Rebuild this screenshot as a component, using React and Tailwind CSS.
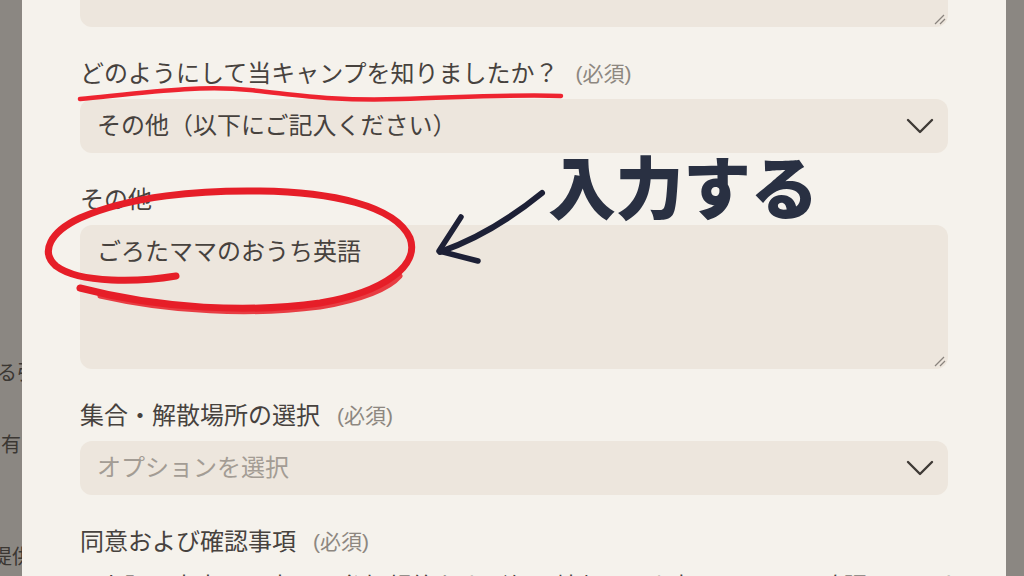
import React from "react";

function Handle() {
  return (
    <svg className="absolute right-[2px] bottom-[2px]" width="12" height="12" viewBox="0 0 12 12">
      <line x1="1" y1="11" x2="10" y2="2" stroke="#8a847e" strokeWidth="1.2" />
      <line x1="6" y1="11" x2="11" y2="6" stroke="#8a847e" strokeWidth="1.2" />
    </svg>
  );
}

function Label({ text, required = true }) {
  return (
    <div className="mt-[29px] mb-[7px] flex h-[36px] shrink-0 items-center whitespace-nowrap text-[24px] leading-[36px] text-[#47423e]">
      <span>{text}</span>
      {required && <span className="ml-[17px] text-[21px] text-[#8d8780]">(必須)</span>}
    </div>
  );
}

function Chevron() {
  return (
    <svg width="28" height="17" viewBox="0 0 28 17" fill="none">
      <polyline points="2,2 14,14 26,2" stroke="#3f3a36" strokeWidth="2.4" strokeLinecap="round" strokeLinejoin="round" />
    </svg>
  );
}

function Select({ value, placeholder }) {
  return (
    <div className="flex h-[54px] shrink-0 items-center justify-between rounded-xl bg-[#ede6dd] pl-[17px] pr-[14px] text-[24px]">
      <span className={placeholder ? "text-[#a39c94]" : "text-[#47423e]"}>{value}</span>
      <Chevron />
    </div>
  );
}

export default function App() {
  return (
    <div className="relative flex h-[576px] w-[1024px] overflow-hidden bg-[#8b8782] font-['Liberation_Sans','Noto_Sans_CJK_JP',sans-serif]">
      <div className="w-[22px] shrink-0 overflow-hidden text-[20px] leading-[24px] text-[#3b3733]">
        <p className="mt-[361px] ml-[-3px] whitespace-nowrap">る引</p>
        <p className="mt-[48px] ml-[1px] whitespace-nowrap">有</p>
        <p className="mt-[88px] ml-[-8px] whitespace-nowrap">提供</p>
      </div>

      <div className="flex w-[984px] shrink-0 flex-col bg-[#f5f2ec] px-[58px] text-[#47423e]">
        <div className="relative mt-[-117px] h-[144px] shrink-0 rounded-xl bg-[#ede6dd]">
          <Handle />
        </div>

        <Label text="どのようにして当キャンプを知りましたか？" />
        <Select value="その他（以下にご記入ください）" />

        <Label text="その他" required={false} />
        <div className="relative h-[144px] shrink-0 rounded-xl bg-[#ede6dd] px-[17px] pt-3 text-[24px] leading-[30px] text-[#47423e]">
          ごろたママのおうち英語
          <Handle />
        </div>

        <Label text="集合・解散場所の選択" />
        <Select value="オプションを選択" placeholder />

        <Label text="同意および確認事項" />
        <p className="mt-[2px] whitespace-nowrap pl-[20px] text-[24px] leading-[36px] text-[#47423e]">
          上記の内容に同意し、参加規約および個人情報の取り扱いについて確認しました
        </p>
      </div>

      <svg className="pointer-events-none absolute left-0 top-0" width="1024" height="576" viewBox="0 0 1024 576" fill="none">
        <path d="M80,99 C150,92 200,85 250,90 S330,101 400,99 S520,94 561,96" stroke="#ee2430" strokeWidth="4.5" strokeLinecap="round" />
        <path d="M176,276 C140,282 80,284 56,266 C40,252 50,232 80,218 C130,196 200,190 260,191 C330,192 395,205 410,238 C420,265 385,292 320,303 C250,313 160,309 80,288" stroke="#e61e28" strokeWidth="7" strokeLinecap="round" />
        <path d="M100,296 C170,312 250,316 320,307 C360,300 388,290 400,276" stroke="#e61e28" strokeWidth="5" strokeLinecap="round" opacity="0.85" />
        <path d="M542,193 C515,215 480,238 440,252" stroke="#1d2036" strokeWidth="6" strokeLinecap="round" />
        <path d="M461,217 L439,251 L478,261" stroke="#1d2036" strokeWidth="5.5" strokeLinecap="round" strokeLinejoin="round" />
      </svg>
      <div className="pointer-events-none absolute left-[548px] top-[151px] whitespace-nowrap font-['Noto_Sans_CJK_JP',sans-serif] text-[68px] font-black leading-none tracking-[-0.5px] text-[#293042]">
        入力する
      </div>
    </div>
  );
}
